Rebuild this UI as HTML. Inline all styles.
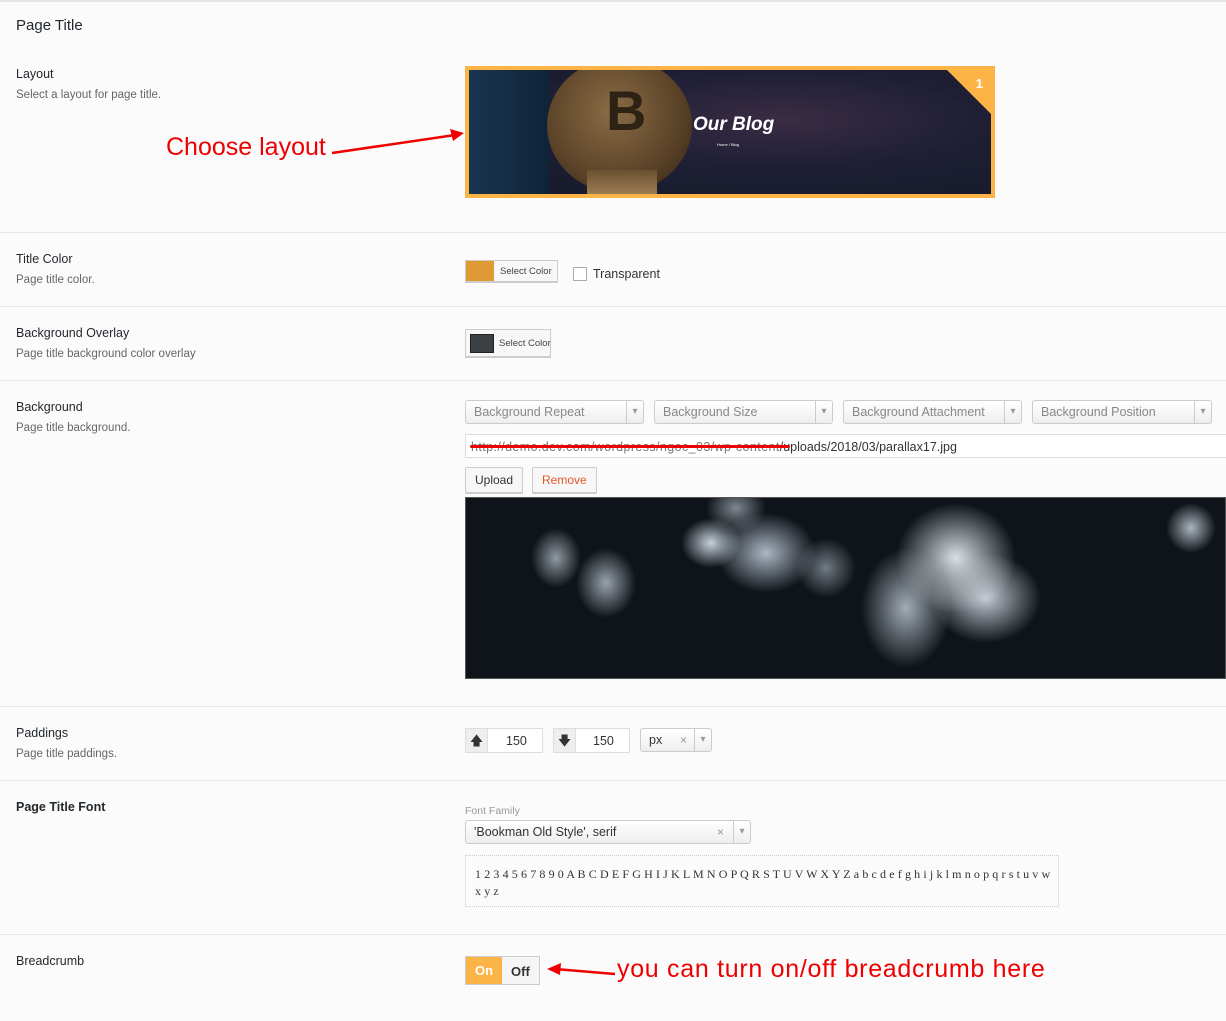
<!DOCTYPE html>
<html><head><meta charset="utf-8"><style>
*{box-sizing:border-box;margin:0;padding:0}
body{width:1226px;height:1021px;background:#fbfbfb;font-family:"Liberation Sans",sans-serif;position:relative;overflow:hidden;color:#333}
.a{position:absolute;white-space:nowrap}
.h{font-size:12.5px;color:#23282d}
.d{font-size:11.5px;color:#666}
.sep{position:absolute;left:0;width:1226px;height:1px;background:#e6e6e6}
.sel{position:absolute;height:24px;border:1px solid #ccc;border-radius:3px;background:linear-gradient(#fff,#eee);font-size:12.5px;color:#888;padding:4px 8px;white-space:nowrap}
.sel:after{content:"▾";position:absolute;right:0;top:0;width:16px;height:22px;border-left:1px solid #ccc;color:#999;font-size:10px;text-align:center;line-height:22px}
.btn{position:absolute;height:26px;border:1px solid #ccc;background:#f7f7f7;border-radius:2px;font-size:12px;padding:5px 9px;box-shadow:0 1px 0 #ccc}
.red{color:#e00;font-size:25px}
</style></head><body>
<div class="a" style="left:0;top:0;width:1226px;height:2px;background:#e5e5e5"></div>
<div class="a" style="left:16px;top:17px;font-size:15px;color:#23282d">Page Title</div>

<div class="a h" style="left:16px;top:67px">Layout</div>
<div class="a d" style="left:16px;top:89px">Select a layout for page title.</div>
<div class="a red" style="left:166px;top:133px">Choose layout</div>
<svg class="a" style="left:330px;top:128px" width="136" height="30"><line x1="2" y1="25" x2="125" y2="7" stroke="#e00" stroke-width="2.5"/><polygon points="134,5 120,1 123,13" fill="#e00"/></svg>
<div class="a" style="left:465px;top:66px;width:530px;height:132px;background:#fdb447;padding:4px">
<div style="position:relative;width:100%;height:100%;overflow:hidden;background:radial-gradient(ellipse at 60% 40%,#3a2c45 0%,#1e1f35 45%,#151a2a 100%)">
<div class="a" style="left:0;top:0;width:80px;height:124px;background:linear-gradient(90deg,#1a3550,#0e2438)"></div>
<div class="a" style="left:78px;top:-12px;width:145px;height:135px;border-radius:50%;background:radial-gradient(circle at 45% 40%,#8a6c44,#5a4228 60%,#2a1e12)"></div>
<div class="a" style="left:118px;top:100px;width:70px;height:30px;background:linear-gradient(#6a5030,#a8885a)"></div>
<div class="a" style="left:137px;top:8px;font-size:56px;font-weight:bold;color:#2e2214">B</div>
<div class="a" style="left:224px;top:44px;font-size:19px;font-style:italic;font-weight:bold;color:#fff">Our Blog</div>
<div class="a" style="left:248px;top:72px;font-size:4px;color:#fff">Home / Blog</div>
<div class="a" style="right:0;top:0;width:0;height:0;border-left:44px solid transparent;border-top:44px solid #fdb447"></div>
<div class="a" style="right:8px;top:6px;color:#fff;font-weight:bold;font-size:13px">1</div>
</div></div>

<div class="sep" style="top:232px"></div>
<div class="a h" style="left:16px;top:252px">Title Color</div>
<div class="a d" style="left:16px;top:274px">Page title color.</div>
<div class="a" style="left:465px;top:260px;width:93px;height:22px;border:1px solid #ccc;background:#f7f7f7;box-shadow:0 1px 0 #ccc"><div class="a" style="left:0;top:0;width:28px;height:20px;background:#e09a33"></div><div class="a" style="left:34px;top:5px;font-size:9.5px;color:#444">Select Color</div></div>
<div class="a" style="left:573px;top:267px;width:14px;height:14px;border:1px solid #aaa;background:#fff"></div>
<div class="a" style="left:593px;top:267px;font-size:12.5px;color:#333">Transparent</div>

<div class="sep" style="top:306px"></div>
<div class="a h" style="left:16px;top:326px">Background Overlay</div>
<div class="a d" style="left:16px;top:348px">Page title background color overlay</div>
<div class="a" style="left:465px;top:329px;width:86px;height:28px;border:1px solid #ccc;background:#f7f7f7;box-shadow:0 1px 0 #ccc"><div class="a" style="left:4px;top:4px;width:24px;height:19px;background:#3b4045;border:1px solid #222"></div><div class="a" style="left:33px;top:8px;font-size:9.5px;color:#444">Select Color</div></div>

<div class="sep" style="top:380px"></div>
<div class="a h" style="left:16px;top:400px">Background</div>
<div class="a d" style="left:16px;top:422px">Page title background.</div>
<div class="sel" style="left:465px;top:400px;width:179px">Background Repeat</div>
<div class="sel" style="left:654px;top:400px;width:179px">Background Size</div>
<div class="sel" style="left:843px;top:400px;width:179px">Background Attachment</div>
<div class="sel" style="left:1032px;top:400px;width:180px">Background Position</div>
<div class="a" style="left:465px;top:434px;width:770px;height:24px;border:1px solid #ddd;background:#fff;font-size:12.5px;padding:5px 5px;color:#333"><span style="color:#777;letter-spacing:0.4px">http://demo.dev.com/wordpress/ngoc_03/wp-content</span>/uploads/2018/03/parallax17.jpg</div>
<div class="a" style="left:470px;top:445px;width:320px;height:3px;background:#e00;border-radius:2px"></div>
<div class="btn" style="left:465px;top:467px">Upload</div>
<div class="btn" style="left:532px;top:467px;color:#e8552a">Remove</div>
<div class="a" style="left:465px;top:497px;width:761px;height:182px;border:1px solid #555;background:
radial-gradient(ellipse 30px 25px at 245px 45px,rgba(220,230,240,.9),transparent),
radial-gradient(ellipse 50px 40px at 300px 55px,rgba(200,210,225,.85),transparent),
radial-gradient(ellipse 60px 55px at 490px 60px,rgba(230,235,240,.95),transparent),
radial-gradient(ellipse 45px 60px at 440px 110px,rgba(200,210,220,.8),transparent),
radial-gradient(ellipse 55px 45px at 520px 100px,rgba(215,220,230,.9),transparent),
radial-gradient(ellipse 30px 30px at 360px 70px,rgba(180,190,200,.6),transparent),
radial-gradient(ellipse 25px 30px at 90px 60px,rgba(200,210,220,.7),transparent),
radial-gradient(ellipse 30px 35px at 140px 85px,rgba(200,210,220,.75),transparent),
radial-gradient(ellipse 25px 25px at 725px 30px,rgba(210,220,230,.8),transparent),
radial-gradient(ellipse 30px 25px at 270px 10px,rgba(200,210,220,.6),transparent),
#0e1419"></div>

<div class="sep" style="top:706px"></div>
<div class="a h" style="left:16px;top:726px">Paddings</div>
<div class="a d" style="left:16px;top:748px">Page title paddings.</div>
<div class="a" style="left:465px;top:728px;width:78px;height:25px;border:1px solid #ddd;background:#fff"><div class="a" style="left:0;top:0;width:22px;height:23px;background:#eee;border-right:1px solid #ddd;text-align:center;font-size:13px;line-height:23px">🡅</div><div class="a" style="left:40px;top:5px;font-size:12.5px">150</div></div>
<div class="a" style="left:553px;top:728px;width:77px;height:25px;border:1px solid #ddd;background:#fff"><div class="a" style="left:0;top:0;width:22px;height:23px;background:#eee;border-right:1px solid #ddd;text-align:center;font-size:13px;line-height:23px">🡇</div><div class="a" style="left:39px;top:5px;font-size:12.5px">150</div></div>
<div class="sel" style="left:640px;top:728px;width:72px;color:#333">px<span class="a" style="left:39px;top:4px;color:#999;font-size:12px">×</span></div>

<div class="sep" style="top:780px"></div>
<div class="a h" style="left:16px;top:800px;font-weight:bold">Page Title Font</div>
<div class="a" style="left:465px;top:805px;font-size:10.5px;color:#999">Font Family</div>
<div class="sel" style="left:465px;top:820px;width:286px;color:#333">'Bookman Old Style', serif<span class="a" style="left:251px;top:4px;color:#999;font-size:12px">×</span></div>
<div class="a" style="left:465px;top:855px;width:594px;height:52px;border:1px dotted #ccc;padding:10px 9px;font-family:'Liberation Serif',serif;font-size:12px;letter-spacing:0.1px;line-height:17px;color:#333;overflow:hidden">1 2 3 4 5 6 7 8 9 0 A B C D E F G H I J K L M N O P Q R S T U V W X Y Z a b c d e f g h i j k l m n o p q r s t u v w<br>x y z</div>

<div class="sep" style="top:934px"></div>
<div class="a h" style="left:16px;top:954px">Breadcrumb</div>
<div class="a" style="left:465px;top:956px;width:75px;height:29px;border:1px solid #ccc;background:#f5f5f5"><div class="a" style="left:0;top:0;width:36px;height:27px;background:#fdb447;color:#fff;font-weight:bold;font-size:13px;text-align:center;line-height:27px">On</div><div class="a" style="left:45px;top:7px;font-weight:bold;font-size:13px;color:#333">Off</div></div>
<svg class="a" style="left:545px;top:962px" width="72" height="16"><line x1="10" y1="7" x2="70" y2="12" stroke="#e00" stroke-width="2.5"/><polygon points="2,7 16,1 15,13" fill="#e00"/></svg>
<div class="a red" style="left:617px;top:955px;letter-spacing:0.7px">you can turn on/off breadcrumb here</div>
</body></html>
